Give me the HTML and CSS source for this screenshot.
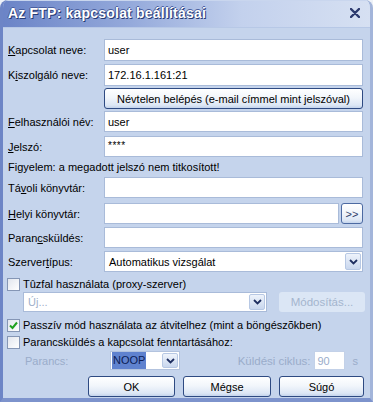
FILE: index.html
```html
<!DOCTYPE html>
<html lang="hu">
<head>
<meta charset="utf-8">
<title>Az FTP: kapcsolat beállításai</title>
<link rel="stylesheet" href="styles.css">
</head>
<body>
<div class="window">
  <div class="titlebar">
    <span class="title">Az FTP: kapcsolat beállításai</span>
    <svg class="close" width="10" height="10" viewBox="0 0 10 10"><path d="M1 1 L9 9 M9 1 L1 9" stroke="#2c3a6e" stroke-width="2.4" stroke-linecap="round"/></svg>
  </div>
  <div class="body">
    <div class="row r1"><span class="lbl"><u>K</u>apcsolat neve:</span><div class="field">user</div></div>
    <div class="row r2"><span class="lbl">K<u>i</u>szolgáló neve:</span><div class="field">172.16.1.161:21</div></div>
    <div class="row r3"><span class="lbl"></span><div class="btn wide">Névtelen belépés (e-mail címmel mint jelszóval)</div></div>
    <div class="row r4"><span class="lbl"><u>F</u>elhasználói név:</span><div class="field">user</div></div>
    <div class="row r5"><span class="lbl"><u>J</u>elszó:</span><div class="field pw">****</div></div>
    <div class="note">Figyelem: a megadott jelszó nem titkosított!</div>
    <div class="row r7"><span class="lbl">Tá<u>v</u>oli könyvtár:</span><div class="field"></div></div>
    <div class="row r8"><span class="lbl"><u>H</u>elyi könyvtár:</span><div class="field short"></div><div class="btn more">&gt;&gt;</div></div>
    <div class="row r9"><span class="lbl">Paran<u>c</u>sküldés:</span><div class="field"></div></div>
    <div class="row r10"><span class="lbl">Szerver<u>t</u>ípus:</span>
      <div class="field select">Automatikus vizsgálat
        <span class="drop"><svg width="9" height="6" viewBox="0 0 9 6"><path d="M1 1 L4.5 4.5 L8 1" fill="none" stroke="#1e2e60" stroke-width="1.8"/></svg></span>
      </div>
    </div>
    <div class="check c1"><span class="box"></span><span>Tûzfal használata (proxy-szerver)</span></div>
    <div class="proxy">
      <div class="field combo"><span class="ph">Új...</span>
        <span class="drop"><svg width="9" height="6" viewBox="0 0 9 6"><path d="M1 1 L4.5 4.5 L8 1" fill="none" stroke="#1e2e60" stroke-width="1.8"/></svg></span>
      </div>
      <div class="btn disabled">Módosítás...</div>
    </div>
    <div class="check c2"><span class="box"><svg width="11" height="11" viewBox="0 0 11 11"><path d="M2 5.5 L4.5 8 L9 2.5" fill="none" stroke="#21a121" stroke-width="2"/></svg></span><span>Passzív mód használata az átvitelhez (mint a böngészõkben)</span></div>
    <div class="check c3"><span class="box"></span><span>Parancsküldés a kapcsolat fenntartásához:</span></div>
    <div class="keep">
      <span class="dis plbl">Parancs:</span>
      <div class="field noop"><span class="hl">NOOP</span>
        <span class="drop"><svg width="9" height="6" viewBox="0 0 9 6"><path d="M1 1 L4.5 4.5 L8 1" fill="none" stroke="#1e2e60" stroke-width="1.8"/></svg></span>
      </div>
      <span class="dis cyc">Küldési ciklus:</span>
      <div class="field num dis">90</div>
      <span class="dis sec">s</span>
    </div>
    <div class="buttons">
      <div class="btn b-ok">OK</div>
      <div class="btn b-cancel">Mégse</div>
      <div class="btn b-help">Súgó</div>
    </div>
  </div>
</div>
</body>
</html>
```

FILE: styles.css
```css
html, body {
  margin: 0;
  padding: 0;
  background: #eef2f8;
}
body {
  font-family: "Liberation Sans", Arial, sans-serif;
  font-size: 11px;
  color: #000;
}
.window {
  width: 373px;
  height: 402px;
  box-sizing: border-box;
  border-radius: 8px 8px 0 0;
  overflow: hidden;
  background: #c5d4ec;
  border-left: 3px solid #6d85c6;
  border-right: 3px solid #a3b5da;
  border-bottom: 4px solid #7d93cc;
  display: flex;
  flex-direction: column;
}
.titlebar {
  height: 28px;
  flex: none;
  display: flex;
  align-items: center;
  justify-content: space-between;
  padding: 0 10px 0 5px;
  background: linear-gradient(90deg, #6b84c7 0%, #95aadb 35%, #c3d1ed 65%, #d6e0f2 100%);
  box-shadow: inset 0 1px 0 #c9d6ee, inset 0 -1px 0 #b7c8e6;
}
.title {
  font-weight: bold;
  font-size: 14px;
  color: #fff;
  letter-spacing: 0.2px;
  text-shadow: 1px 1px 0 #263a74, -1px 0 0 #4a5f9e, 0 -1px 0 #4a5f9e;
  margin-top: -2px;
}
.close { margin-top: -2px; }
.body {
  flex: 1;
  padding: 11px 7px 0 5px;
  display: flex;
  flex-direction: column;
}
u { text-decoration: underline; text-underline-offset: 1px; }
.row {
  display: flex;
  align-items: center;
  height: 21px;
}
.r1 { height: 22px; }
.r2 { height: 22px; margin-top: 3px; }
.r3 { margin-top: 2px; }
.r4 { margin-top: 2px; }
.r5 { margin-top: 4px; }
.r7 { margin-top: 2px; }
.r8 { margin-top: 5px; }
.r9 { margin-top: 3px; }
.r10 { margin-top: 3px; }
.lbl {
  width: 96px;
  flex: none;
}
.field {
  flex: 1;
  height: 100%;
  box-sizing: border-box;
  background: #fff;
  border: 1px solid #a9bbd9;
  padding: 0 3px;
  display: flex;
  align-items: center;
  position: relative;
}
.pw { font-size: 10px; letter-spacing: 0.5px; padding-bottom: 3px; }
.note {
  height: 15px;
  margin-top: 3px;
  line-height: 15px;
}
.short { flex: none; width: 235px; }
.btn {
  box-sizing: border-box;
  border: 1px solid #2e4a82;
  border-radius: 3px;
  background: linear-gradient(#ffffff 0%, #f2f6fb 45%, #dde7f5 85%, #c4d4ec 100%);
  display: flex;
  align-items: center;
  justify-content: center;
  height: 100%;
}
.wide { flex: 1; }
.more {
  width: 23px;
  margin-left: 2px;
  color: #2d3c6a;
  font-size: 11px;
  border-color: #4c6aa2;
}
.select { padding-left: 4px; }
.drop {
  position: absolute;
  right: 1px;
  top: 1px;
  bottom: 1px;
  width: 16px;
  box-sizing: border-box;
  border: 1px solid #b7c8e4;
  border-radius: 2px;
  background: linear-gradient(#eef3fb, #c9d7ee);
  display: flex;
  align-items: center;
  justify-content: center;
}
.check {
  display: flex;
  align-items: center;
  height: 16px;
  margin-left: -1px;
}
.c1 { margin-top: 4px; }
.c2 { margin-top: 5px; }
.c3 { margin-top: 1px; }
.box {
  width: 13px;
  height: 13px;
  box-sizing: border-box;
  border: 1px solid #8596b5;
  background: linear-gradient(135deg, #e2e6ee, #ffffff);
  margin-right: 3px;
  display: flex;
  align-items: center;
  justify-content: center;
  flex: none;
}
.proxy {
  display: flex;
  align-items: center;
  height: 20px;
  padding-left: 15px;
}
.combo { flex: none; width: 244px; }
.ph { color: #9fb0ca; padding-left: 1px; }
.disabled {
  flex: none;
  width: 86px;
  margin-left: 12px;
  border: none;
  background: #dbe6f5;
  color: #a4b5ce;
  font-size: 11.5px;
}
.keep {
  display: flex;
  align-items: center;
  height: 19px;
  margin-top: 1px;
  padding-left: 17px;
}
.dis { color: #9aacca; }
.plbl { width: 85px; flex: none; }
.noop { flex: none; width: 70px; padding: 0 1px; border-color: #b3c3de; }
.hl { background: #5f82cf; color: #0b1d55; padding: 2px 1px; line-height: 13px; }
.cyc { margin-left: auto; margin-right: 3px; font-size: 11.5px; }
.num { flex: none; width: 31px; border-color: #c3d1e8; }
.sec { margin-left: 8px; margin-right: 5px; }
.buttons {
  display: flex;
  justify-content: flex-end;
  gap: 8px;
  height: 21px;
  margin-top: 6px;
  margin-right: -1px;
}
.b-ok { width: 87px; }
.b-cancel { width: 88px; }
.b-help { width: 85px; }
```
